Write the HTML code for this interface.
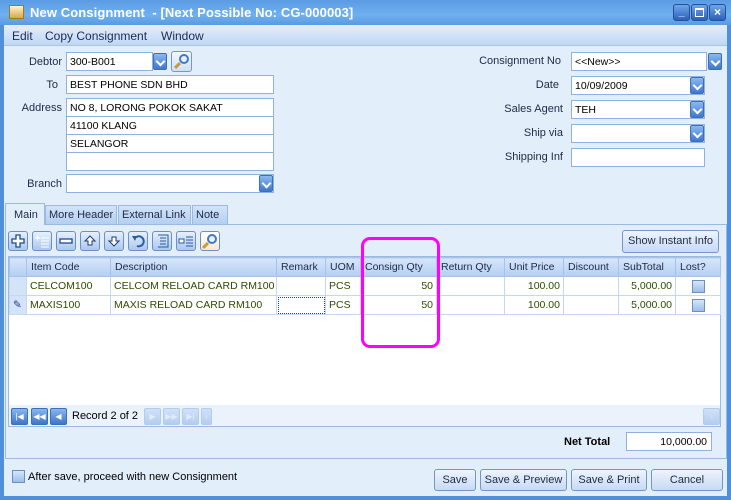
<!DOCTYPE html>
<html><head><meta charset="utf-8"><style>
*{box-sizing:border-box;margin:0;padding:0}
body{width:731px;height:500px;overflow:hidden;font-family:"Liberation Sans",sans-serif;font-size:11px;color:#1e2a44;position:relative;background:#dfebfa}
.a{position:absolute}
.win{left:0;top:0;width:731px;height:500px;background:#4f8fdc}
.title{left:0;top:0;width:731px;height:25px;background:linear-gradient(#5b9be4,#6fb0f0 60%,#5a9ae0)}
.ttext{left:30px;top:5px;color:#fff;font-weight:bold;font-size:13px;letter-spacing:0.1px}
.menu{left:4px;top:25px;width:723px;height:21px;background:linear-gradient(#e4eefb,#bfd7f3);border-bottom:1px solid #a8c4e8}
.body{left:4px;top:46px;width:723px;height:450px;background:#e3eefb}
.lbl{text-align:right;color:#1e2a44}
.in{background:#fff;border:1px solid #8eb1e0;padding:3px 0 0 3px;color:#000;height:19px;font-size:10.5px}
.dd{width:14px;height:17px;border-radius:2px;background:linear-gradient(#8cb8f0,#3f78cc);border:1px solid #3b6fbb}
.dd:after{content:"";position:absolute;left:3px;top:4px;width:5px;height:5px;border-right:2px solid #fff;border-bottom:2px solid #fff;transform:rotate(45deg)}
.btn{border:1px solid #7596c9;border-radius:3px;background:linear-gradient(#eef4fd,#c6daf5);text-align:center;color:#1e2a44;line-height:20px}
.tb{width:20px;height:20px;border:1px solid #6c8fc6;border-radius:3px;background:linear-gradient(#e7f0fd,#aac7ee)}
.tb svg{position:absolute;left:1px;top:1px}
.tab{top:205px;height:19px;border:1px solid #9cb9e2;border-bottom:none;background:linear-gradient(#d3e3f8,#b4cff1);padding:3px 0 0 3px}
table{border-collapse:collapse;table-layout:fixed}
td{border:1px solid #c5d8f1;height:19px;padding:0 3px;white-space:nowrap;overflow:hidden;color:#2d4a00;font-size:10.5px}
th{border:1px solid #a7c3ea;height:19px;font-weight:normal;text-align:left;padding:0 4px;background:linear-gradient(#d6e6fb,#b4cef2);color:#1e2a44;font-size:10.5px}
.r{text-align:right}
.nb{width:17px;height:17px;border-radius:2px;background:linear-gradient(#8ab6ee,#3e76c9);border:1px solid #3b6fbb;color:#fff;font-size:8px;text-align:center;line-height:15px}
.nd{background:linear-gradient(#d0e2f8,#b3cdf0);border-color:#b3cbed;color:#e0ecfb}
</style></head><body>
<div class="a win"></div>
<div class="a title"></div>
<div class="a" style="left:9px;top:5px;width:15px;height:14px;background:linear-gradient(#fff4cc,#d8a848);border:1px solid #a07828"></div>
<div class="a ttext">New Consignment&nbsp; - [Next Possible No: CG-000003]</div>
<div class="a" style="left:673px;top:4px;width:17px;height:17px;border-radius:3px;background:linear-gradient(#6ea6ea,#2d60b8);border:1px solid #24509a;color:#fff;font-weight:bold;text-align:center;line-height:14px">_</div>
<div class="a" style="left:691px;top:4px;width:17px;height:17px;border-radius:3px;background:linear-gradient(#6ea6ea,#2d60b8);border:1px solid #24509a"><div class="a" style="left:3px;top:3px;width:9px;height:9px;border:1px solid #fff;border-top-width:2px"></div></div>
<div class="a" style="left:709px;top:4px;width:17px;height:17px;border-radius:3px;background:linear-gradient(#6ea6ea,#2d60b8);border:1px solid #24509a;color:#fff;font-weight:bold;text-align:center;line-height:15px;font-size:12px">×</div>
<div class="a menu"></div>
<div class="a" style="left:12px;top:29px;font-size:12px;color:#1e2a55">Edit</div>
<div class="a" style="left:45px;top:29px;font-size:12px;color:#1e2a55">Copy Consignment</div>
<div class="a" style="left:161px;top:29px;font-size:12px;color:#1e2a55">Window</div>
<div class="a body"></div>

<div class="a lbl" style="left:10px;top:56px;width:52px">Debtor</div>
<div class="a in" style="left:66px;top:52px;width:87px">300-B001</div>
<div class="a dd" style="left:153px;top:53px"></div>
<div class="a" style="left:171px;top:51px;width:21px;height:21px;border:1px solid #7596c9;border-radius:3px;background:linear-gradient(#f4f8fe,#cfe0f6)"><div class="a" style="left:7px;top:2px;width:10px;height:10px;border:2px solid #3f7ac8;border-radius:50%;background:#e8f2ff"></div><div class="a" style="left:2px;top:12px;width:7px;height:3px;background:#c89a40;transform:rotate(-45deg)"></div></div>
<div class="a lbl" style="left:10px;top:79px;width:48px">To</div>
<div class="a in" style="left:66px;top:75px;width:208px">BEST PHONE SDN BHD</div>
<div class="a lbl" style="left:10px;top:102px;width:52px">Address</div>
<div class="a in" style="left:66px;top:98px;width:208px">NO 8, LORONG POKOK SAKAT</div>
<div class="a in" style="left:66px;top:116px;width:208px">41100 KLANG</div>
<div class="a in" style="left:66px;top:134px;width:208px">SELANGOR</div>
<div class="a in" style="left:66px;top:152px;width:208px"></div>
<div class="a lbl" style="left:10px;top:178px;width:52px">Branch</div>
<div class="a in" style="left:66px;top:174px;width:208px"></div>
<div class="a dd" style="left:259px;top:175px"></div>

<div class="a lbl" style="left:450px;top:55px;width:111px">Consignment No</div>
<div class="a in" style="left:571px;top:52px;width:136px">&lt;&lt;New&gt;&gt;</div>
<div class="a dd" style="left:708px;top:53px"></div>
<div class="a lbl" style="left:450px;top:79px;width:109px">Date</div>
<div class="a in" style="left:571px;top:76px;width:134px">10/09/2009</div>
<div class="a dd" style="left:690px;top:77px"></div>
<div class="a lbl" style="left:450px;top:103px;width:113px">Sales Agent</div>
<div class="a in" style="left:571px;top:100px;width:134px">TEH</div>
<div class="a dd" style="left:690px;top:101px"></div>
<div class="a lbl" style="left:450px;top:127px;width:113px">Ship via</div>
<div class="a in" style="left:571px;top:124px;width:134px"></div>
<div class="a dd" style="left:690px;top:125px"></div>
<div class="a lbl" style="left:450px;top:151px;width:113px">Shipping Inf</div>
<div class="a in" style="left:571px;top:148px;width:134px"></div>

<div class="a" style="left:5px;top:224px;width:722px;height:235px;border:1px solid #9cb9e2;background:#e3eefb"></div>
<div class="a tab" style="left:5px;top:203px;height:22px;width:40px;background:#e3eefb;border-bottom:none;padding:5px 0 0 8px">Main</div>
<div class="a tab" style="left:45px;width:72px">More Header</div>
<div class="a tab" style="left:118px;width:73px">External Link</div>
<div class="a tab" style="left:192px;width:36px">Note</div>

<div class="a tb" style="left:8px;top:231px"><svg width="16" height="16"><path d="M6 2h4v4h4v4h-4v4h-4v-4h-4v-4h4z" fill="#fff" stroke="#1e4a90" stroke-width="1.3"/></svg></div>
<div class="a tb" style="left:32px;top:231px"><svg width="16" height="16"><path d="M1 5h5M3.5 2.5v5" stroke="#fff" stroke-width="1.3"/><path d="M7 5h8M7 8h8M7 11h8M7 14h8" stroke="#fff" stroke-width="1"/></svg></div>
<div class="a tb" style="left:56px;top:231px"><svg width="16" height="16"><rect x="2" y="6" width="12" height="4" fill="#fff" stroke="#1e4a90" stroke-width="1.3"/></svg></div>
<div class="a tb" style="left:80px;top:231px"><svg width="16" height="16"><path d="M8 3l5 5h-3v4h-4v-4h-3z" fill="#fff" stroke="#1e3a70"/></svg></div>
<div class="a tb" style="left:104px;top:231px"><svg width="16" height="16"><path d="M8 13l5-5h-3v-4h-4v4h-3z" fill="#fff" stroke="#1e3a70"/></svg></div>
<div class="a tb" style="left:128px;top:231px"><svg width="16" height="16"><path d="M5 5a5 5 0 1 1 2 8" fill="none" stroke="#2d5aa0" stroke-width="2"/><path d="M2 3l5 0l-2 5z" fill="#2d5aa0"/></svg></div>
<div class="a tb" style="left:152px;top:231px"><svg width="16" height="16"><path d="M4 2h10v12h-10" fill="none" stroke="#2d5aa0"/><path d="M6 5h6M6 8h6M6 11h6" stroke="#2d5aa0"/></svg></div>
<div class="a tb" style="left:176px;top:231px"><svg width="16" height="16"><rect x="1" y="6" width="5" height="4" fill="#fff" stroke="#2d5aa0"/><path d="M8 4h7M8 7h7M8 10h7M8 13h7" stroke="#2d5aa0"/></svg></div>
<div class="a tb" style="left:200px;top:231px;background:linear-gradient(#fff,#fbe7c8)"><div class="a" style="left:6px;top:2px;width:10px;height:10px;border:2px solid #3f7ac8;border-radius:50%;background:#e8f2ff"></div><div class="a" style="left:1px;top:12px;width:7px;height:3px;background:#c89a40;transform:rotate(-45deg)"></div></div>
<div class="a btn" style="left:622px;top:230px;width:97px;height:23px">Show Instant Info</div>

<div class="a" style="left:8px;top:256px;width:713px;height:171px;background:#fff;border:1px solid #9cb9e2">
<table style="width:711px">
<colgroup><col style="width:17px"><col style="width:84px"><col style="width:166px"><col style="width:49px"><col style="width:35px"><col style="width:76px"><col style="width:68px"><col style="width:59px"><col style="width:55px"><col style="width:57px"><col style="width:45px"></colgroup>
<tr><th></th><th>Item Code</th><th>Description</th><th>Remark</th><th>UOM</th><th>Consign Qty</th><th>Return Qty</th><th>Unit Price</th><th>Discount</th><th>SubTotal</th><th>Lost?</th></tr>
<tr><td style="background:#d3e3f8"></td><td>CELCOM100</td><td>CELCOM RELOAD CARD RM100</td><td></td><td>PCS</td><td class="r">50</td><td></td><td class="r">100.00</td><td></td><td class="r">5,000.00</td><td style="text-align:center"><span style="display:inline-block;width:13px;height:13px;border:1px solid #6b8fc4;background:linear-gradient(#d6e6fb,#9dbde8);vertical-align:middle"></span></td></tr>
<tr><td style="background:#d3e3f8;color:#1e3a80">✎</td><td>MAXIS100</td><td>MAXIS RELOAD CARD RM100</td><td style="outline:1px dotted #1e3a80;outline-offset:-2px"></td><td>PCS</td><td class="r">50</td><td></td><td class="r">100.00</td><td></td><td class="r">5,000.00</td><td style="text-align:center"><span style="display:inline-block;width:13px;height:13px;border:1px solid #6b8fc4;background:linear-gradient(#d6e6fb,#9dbde8);vertical-align:middle"></span></td></tr>
</table>
<div class="a" style="left:0;top:148px;width:711px;height:21px;background:#eaf2fc"></div>
</div>
<div class="a nb" style="left:11px;top:408px">|◀</div>
<div class="a nb" style="left:31px;top:408px">◀◀</div>
<div class="a nb" style="left:50px;top:408px">◀</div>
<div class="a" style="left:72px;top:410px;color:#000">Record 2 of 2</div>
<div class="a nb nd" style="left:144px;top:408px">▶</div>
<div class="a nb nd" style="left:163px;top:408px">▶▶</div>
<div class="a nb nd" style="left:182px;top:408px">▶|</div>
<div class="a nb nd" style="left:201px;top:408px;width:11px">‹</div>
<div class="a nb nd" style="left:703px;top:408px">›</div>

<div class="a" style="left:564px;top:436px;font-weight:bold;color:#000">Net Total</div>
<div class="a in" style="left:626px;top:432px;width:86px;text-align:right;padding-right:4px">10,000.00</div>

<div class="a" style="left:12px;top:470px;width:13px;height:13px;border:1px solid #6b8fc4;background:linear-gradient(#d6e6fb,#9dbde8)"></div>
<div class="a" style="left:28px;top:471px;color:#000">After save, proceed with new Consignment</div>
<div class="a btn" style="left:434px;top:469px;width:42px;height:22px">Save</div>
<div class="a btn" style="left:480px;top:469px;width:87px;height:22px">Save &amp; Preview</div>
<div class="a btn" style="left:571px;top:469px;width:76px;height:22px">Save &amp; Print</div>
<div class="a btn" style="left:651px;top:469px;width:72px;height:22px">Cancel</div>

<div class="a" style="left:361px;top:237px;width:79px;height:111px;border:3px solid #f0f;border-radius:9px"></div>
</body></html>
